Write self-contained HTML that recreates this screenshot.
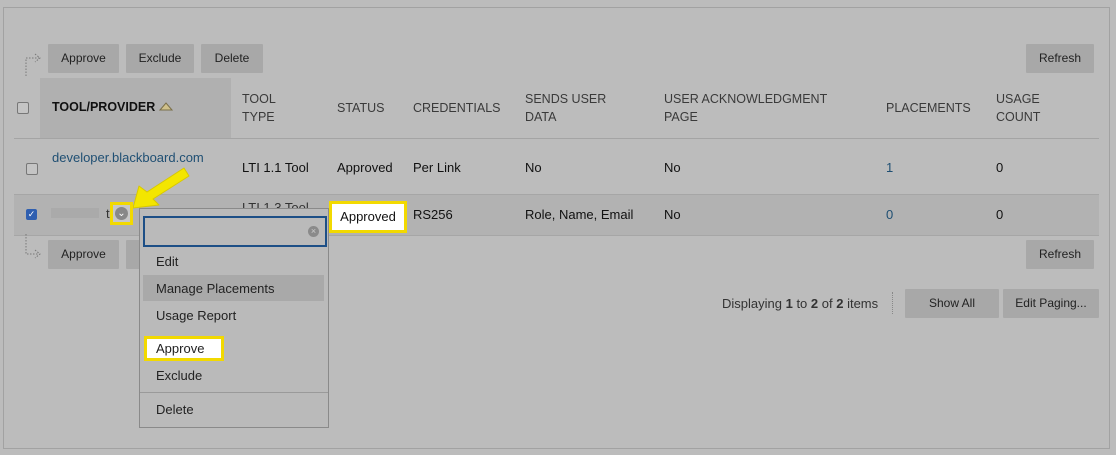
<!DOCTYPE html>
<html><head><style>
body{margin:0;width:1116px;height:455px;background:#bcbcbc;font-family:"Liberation Sans",sans-serif;font-size:13px;color:#111;position:relative;overflow:hidden}
.a{position:absolute}
.frame{left:3px;top:7px;width:1105px;height:440px;border:1px solid #a2a2a2}
.btn{position:absolute;background:#a8a8a8;height:29px;line-height:29px;text-align:center;font-size:12px;color:#222;border-radius:1px}
.h{position:absolute;color:#3a3a3a;font-size:12.5px;line-height:18px}
.t{position:absolute;line-height:16px}
.cb{position:absolute;width:10px;height:10px;border:1px solid #777;border-radius:2px;background:#c4c4c4}
.link{color:#1f4f73}
</style></head><body>
<div class="a frame"></div>
<svg class="a" style="left:22px;top:48px" width="22" height="30"><path d="M4 28V10H17M13 6l5 4-5 4" fill="none" stroke="#777" stroke-dasharray="1.5 1.5"/></svg>
<div class="btn" style="left:48px;top:44px;width:71px">Approve</div>
<div class="btn" style="left:126px;top:44px;width:68px">Exclude</div>
<div class="btn" style="left:201px;top:44px;width:62px">Delete</div>
<div class="btn" style="left:1026px;top:44px;width:68px">Refresh</div>

<div class="a" style="left:40px;top:78px;width:191px;height:60px;background:#b0b0b0"></div>
<div class="cb" style="left:17px;top:102px"></div>
<div class="a" style="left:52px;top:100px;font-weight:bold;font-size:12.5px">TOOL/PROVIDER <svg width="14" height="9" style="vertical-align:0"><path d="M1 8L7 1 13 8Z" fill="#cfc08a" stroke="#7a6f4a"/></svg></div>
<div class="h" style="left:242px;top:90px">TOOL<br>TYPE</div>
<div class="h" style="left:337px;top:99px">STATUS</div>
<div class="h" style="left:413px;top:99px">CREDENTIALS</div>
<div class="h" style="left:525px;top:90px">SENDS USER<br>DATA</div>
<div class="h" style="left:664px;top:90px">USER ACKNOWLEDGMENT<br>PAGE</div>
<div class="h" style="left:886px;top:99px">PLACEMENTS</div>
<div class="h" style="left:996px;top:90px">USAGE<br>COUNT</div>
<div class="a" style="left:14px;top:138px;width:1085px;height:1px;background:#a4a4a4"></div>

<div class="cb" style="left:26px;top:163px"></div>
<div class="t link" style="left:52px;top:150px">developer.blackboard.com</div>
<div class="t" style="left:242px;top:160px">LTI 1.1 Tool</div>
<div class="t" style="left:337px;top:160px">Approved</div>
<div class="t" style="left:413px;top:160px">Per Link</div>
<div class="t" style="left:525px;top:160px">No</div>
<div class="t" style="left:664px;top:160px">No</div>
<div class="t link" style="left:886px;top:160px">1</div>
<div class="t" style="left:996px;top:160px">0</div>

<div class="a" style="left:14px;top:194px;width:1085px;height:40px;background:#b2b2b2;border-top:1px solid #a6a6a6;border-bottom:1px solid #a6a6a6"></div>
<div class="a" style="left:26px;top:209px;width:11px;height:11px;background:#2f5fb0;border-radius:2px;color:#fff;font-size:9px;line-height:11px;text-align:center">✓</div>
<div class="a" style="left:51px;top:208px;width:48px;height:10px;background:#aaa"></div>
<div class="t" style="left:106px;top:206px;color:#333">t</div>
<div class="t" style="left:242px;top:200px;color:#333">LTI 1.3 Tool</div>
<div class="a" style="left:329px;top:201px;width:72px;height:26px;background:#fff;border:3px solid #f2d900;line-height:26px;text-align:center">Approved</div>
<div class="t" style="left:413px;top:207px">RS256</div>
<div class="t" style="left:525px;top:207px">Role, Name, Email</div>
<div class="t" style="left:664px;top:207px">No</div>
<div class="t link" style="left:886px;top:207px">0</div>
<div class="t" style="left:996px;top:207px">0</div>

<!-- arrow -->
<svg class="a" style="left:108px;top:165px" width="85" height="65"><path d="M25 43L31 21 39 27 76 3 81 11 45 34 51 40Z" fill="#f3e600" stroke="#d8c800" stroke-width="1" stroke-linejoin="round"/></svg>
<div class="a" style="left:110px;top:202px;width:23px;height:23px;background:#f2d900"></div>
<div class="a" style="left:113px;top:205px;width:17px;height:17px;background:#c8c8c8"></div>
<div class="a" style="left:115px;top:207px;width:13px;height:13px;background:#888;border-radius:50%;color:#fff;font-size:10px;line-height:13px;text-align:center">⌄</div>

<svg class="a" style="left:22px;top:234px" width="22" height="30"><path d="M4 0V20H17M13 16l5 4-5 4" fill="none" stroke="#777" stroke-dasharray="1.5 1.5"/></svg>
<div class="btn" style="left:48px;top:240px;width:71px">Approve</div>
<div class="btn" style="left:126px;top:240px;width:20px"></div>
<div class="btn" style="left:1026px;top:240px;width:68px">Refresh</div>

<div class="a" style="left:722px;top:296px;color:#333">Displaying <b>1</b> to <b>2</b> of <b>2</b> items</div>
<div class="a" style="left:892px;top:292px;width:1px;height:22px;border-left:1px dotted #888"></div>
<div class="btn" style="left:905px;top:289px;width:94px">Show All</div>
<div class="btn" style="left:1003px;top:289px;width:96px">Edit Paging...</div>

<!-- menu -->
<div class="a" style="left:139px;top:208px;width:188px;height:218px;background:#bababa;border:1px solid #8a8a8a"></div>
<div class="a" style="left:143px;top:216px;width:180px;height:27px;border:2px solid #1d4f86"></div>
<div class="a" style="left:308px;top:226px;width:11px;height:11px;border-radius:50%;background:#8a8a8a;color:#ccc;font-size:9px;line-height:11px;text-align:center">×</div>
<div class="t" style="left:156px;top:254px;color:#222">Edit</div>
<div class="a" style="left:143px;top:275px;width:181px;height:26px;background:#a9a9a9"></div>
<div class="t" style="left:156px;top:281px;color:#222">Manage Placements</div>
<div class="t" style="left:156px;top:308px;color:#222">Usage Report</div>
<div class="a" style="left:144px;top:336px;width:65px;height:19px;background:#fff;border:3px solid #f2d900;line-height:19px;padding-left:9px;color:#222">Approve</div>
<div class="t" style="left:156px;top:368px;color:#222">Exclude</div>
<div class="a" style="left:140px;top:392px;width:188px;height:1px;background:#9a9a9a"></div>
<div class="t" style="left:156px;top:402px;color:#222">Delete</div>
</body></html>
